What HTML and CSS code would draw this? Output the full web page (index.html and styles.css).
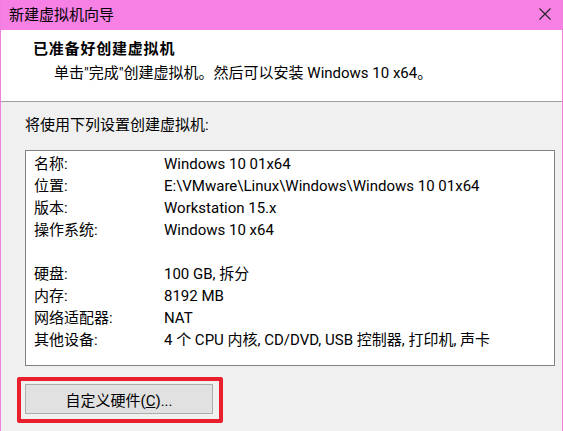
FILE: index.html
```html
<!DOCTYPE html>
<html lang="zh-CN">
<head>
<meta charset="utf-8">
<link rel="stylesheet" href="styles.css">
</head>
<body>
<div class="window">
  <div class="titlebar">
    <span class="title">新建虚拟机向导</span>
    <svg class="close" width="12" height="12" viewBox="0 0 12 12"><path d="M0.5 0.5 L11.5 11.5 M11.5 0.5 L0.5 11.5" stroke="#222" stroke-width="1.1" fill="none"/></svg>
  </div>
  <div class="header">
    <div class="h-title">已准备好创建虚拟机</div>
    <div class="h-sub">单击"完成"创建虚拟机。然后可以安装 Windows 10 x64。</div>
  </div>
  <div class="content">
    <div class="intro">将使用下列设置创建虚拟机:</div>
    <div class="box">
      <div class="row"><span class="k">名称:</span><span class="v">Windows 10 01x64</span></div>
      <div class="row"><span class="k">位置:</span><span class="v">E:\VMware\Linux\Windows\Windows 10 01x64</span></div>
      <div class="row"><span class="k">版本:</span><span class="v">Workstation 15.x</span></div>
      <div class="row"><span class="k">操作系统:</span><span class="v">Windows 10 x64</span></div>
      <div class="row"></div>
      <div class="row"><span class="k">硬盘:</span><span class="v">100 GB, 拆分</span></div>
      <div class="row"><span class="k">内存:</span><span class="v">8192 MB</span></div>
      <div class="row"><span class="k">网络适配器:</span><span class="v">NAT</span></div>
      <div class="row"><span class="k">其他设备:</span><span class="v">4 个 CPU 内核, CD/DVD, USB 控制器, 打印机, 声卡</span></div>
    </div>
    <div class="highlight">
      <button class="btn">自定义硬件(<u>C</u>)...</button>
    </div>
  </div>
</div>
</body>
</html>
```
FILE: styles.css
```css
html, body {
  margin: 0;
  padding: 0;
  background: #f0f0f0;
}
.window {
  width: 563px;
  height: 431px;
  box-sizing: border-box;
  border-left: 1px solid #f080e0;
  border-right: 1px solid #f080e0;
  background: #f0f0f0;
  font-family: Roboto, "Noto Sans CJK SC", sans-serif;
  font-size: 15px;
  color: #000;
  overflow: hidden;
}
.titlebar {
  height: 30px;
  background: #f780e4;
  display: flex;
  align-items: center;
  justify-content: space-between;
  padding: 0 11px 3px 8px;
  box-sizing: border-box;
}
.title {
  font-size: 15px;
  color: #000;
}
.close {
  display: block;
}
.header {
  height: 72px;
  background: #fff;
  border-bottom: 1px solid #a0a0a0;
  box-sizing: border-box;
  padding: 8px 0 0 32px;
}
.h-title {
  font-weight: bold;
  font-size: 15px;
  line-height: 22px;
  letter-spacing: 0.8px;
}
.h-sub {
  padding-left: 21px;
  margin-top: 2px;
  line-height: 22px;
}
.content {
  padding: 12px 8px 0 16px;
}
.intro {
  padding-left: 8px;
  line-height: 22px;
}
.box {
  margin-top: 14px;
  margin-left: 8px;
  width: 530px;
  height: 216px;
  box-sizing: border-box;
  background: #fff;
  border: 1px solid #828282;
  padding: 2px 0 0 8px;
}
.row {
  display: flex;
  height: 22px;
  line-height: 22px;
}
.k {
  width: 130px;
  flex: none;
}
.v {
  white-space: nowrap;
}
.highlight {
  margin-top: 11px;
  width: 206px;
  height: 46px;
  box-sizing: border-box;
  border: 4px solid #e8202e;
  border-radius: 2px;
  padding: 3px 0 0 4px;
}
.btn {
  width: 188px;
  height: 30px;
  background: #e1e1e1;
  border: 1px solid #adadad;
  font-family: inherit;
  font-size: 15px;
  color: #000;
  padding: 0;
  margin: 0;
}
```
